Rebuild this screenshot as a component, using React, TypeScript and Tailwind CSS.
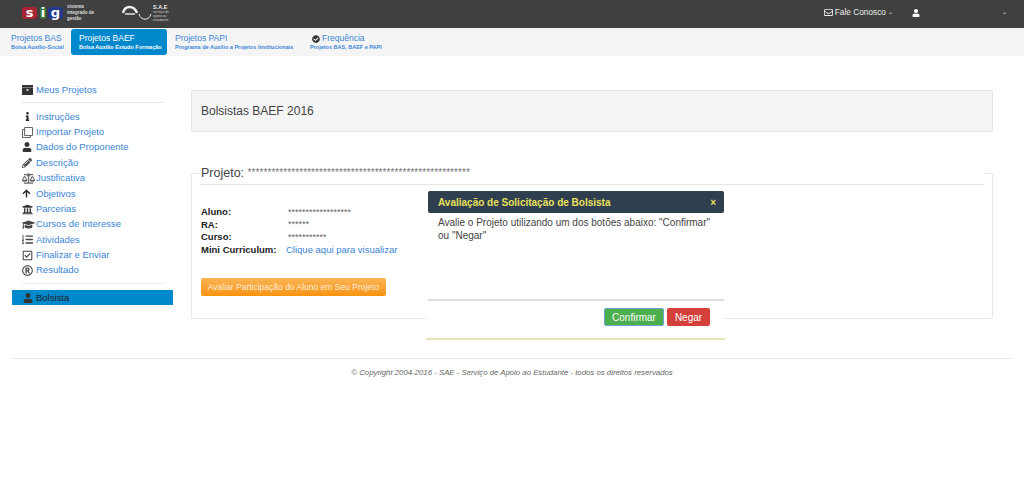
import type { ReactNode } from "react";
import {
  FaArrowUp,
  FaBalanceScale,
  FaCheckCircle,
  FaGraduationCap,
  FaInfo,
  FaListOl,
  FaPencilAlt,
  FaRegCheckSquare,
  FaRegClone,
  FaRegEnvelope,
  FaRegRegistered,
  FaUniversity,
  FaUser,
} from "react-icons/fa";

const tabs = [
  { title: "Projetos BAS", sub: "Bolsa Auxílio-Social", w: "w-[68px]" },
  { title: "Projetos BAEF", sub: "Bolsa Auxílio Estudo Formação", w: "w-[96px]", active: true },
  { title: "Projetos PAPI", sub: "Programa de Auxílio a Projetos Institucionais", w: "w-[135px]" },
  { title: "Frequência", sub: "Projetos BAS, BAEF e PAPI", w: "w-[90px]", check: true },
];

const links: { label: string; icon: ReactNode }[] = [
  { label: "Instruções", icon: <FaInfo className="ml-[1px] size-[9px] text-[#222]" /> },
  { label: "Importar Projeto", icon: <FaRegClone className="size-[11px] text-[#666]" /> },
  { label: "Dados do Proponente", icon: <FaUser className="size-[10px] text-[#333]" /> },
  { label: "Descrição", icon: <FaPencilAlt className="size-[10px] text-[#444]" /> },
  { label: "Justificativa", icon: <FaBalanceScale className="size-[13px] text-[#666]" /> },
  { label: "Objetivos", icon: <FaArrowUp className="size-[9px] text-[#222]" /> },
  { label: "Parcerias", icon: <FaUniversity className="size-[11px] text-[#333]" /> },
  { label: "Cursos de Interesse", icon: <FaGraduationCap className="size-[13px] text-[#444]" /> },
  { label: "Atividades", icon: <FaListOl className="size-[11px] text-[#444]" /> },
  { label: "Finalizar e Enviar", icon: <FaRegCheckSquare className="size-[11px] text-[#444]" /> },
  { label: "Resultado", icon: <FaRegRegistered className="size-[11px] text-[#444]" /> },
];

function SigLogo() {
  return (
    <div className="flex items-center">
      <div className="flex items-center font-bold text-white text-[13px] leading-none font-['DejaVu_Sans',sans-serif]">
        <span className="flex h-[12px] w-[15px] items-center justify-center rounded-[3px] bg-[#a82434]">s</span>
        <span className="ml-[3px] flex h-[12px] w-[6px] items-center justify-center rounded-[2px] bg-[#3a7a3a]">i</span>
        <span className="ml-[2px] flex h-[12px] w-[15px] items-center justify-center rounded-[3px] bg-[#243a8c]">g</span>
      </div>
      <div className="ml-[4px] text-[4.5px] font-bold leading-[6px] text-[#ddd]">
        <div>sistema</div>
        <div>integrado de</div>
        <div>gestão</div>
      </div>
    </div>
  );
}

function SaeLogo() {
  return (
    <div className="flex items-center">
      <svg width="30" height="16" viewBox="0 0 30 16" fill="none" stroke="#eee">
        <path d="M1 8 C3 0 12 0 15 8" strokeWidth="2.4" />
        <path d="M3 9 H13" strokeWidth="1.4" />
        <path d="M17 9 C19 16 27 16 29 9" strokeWidth="1" />
      </svg>
      <div className="ml-[1px] text-[#ccc]">
        <div className="text-[5.5px] font-bold leading-[6px] text-[#eee]">S.A.E</div>
        <div className="text-[3.5px] leading-[4px]">serviço de</div>
        <div className="text-[3.5px] leading-[4px]">apoio ao</div>
        <div className="text-[3.5px] leading-[4px]">estudante</div>
      </div>
    </div>
  );
}

function Field({ label, children }: { label: string; children: ReactNode }) {
  return (
    <div className="flex h-[12.5px] items-center">
      <span className="w-[85px] shrink-0 font-bold text-[#222]">{label}</span>
      {children}
    </div>
  );
}

export default function App() {
  return (
    <div className="relative min-h-[493px] bg-white font-['Liberation_Sans',Arial,sans-serif] text-[9.5px] text-[#333]">
      <header className="flex h-[28px] items-center bg-[#404040] pb-[3px] pl-[22px] text-[#eee]">
        <SigLogo />
        <div className="ml-[28px]">
          <SaeLogo />
        </div>
        <div className="ml-auto flex items-center text-[8.3px]">
          <FaRegEnvelope className="size-[9px]" />
          <span className="ml-[2px]">Fale Conosco</span>
          <span className="ml-[2px] text-[6px]">⌄</span>
          <FaUser className="ml-[19px] size-[8px] text-white" />
          <span className="ml-[82px] mr-[17px] text-[6px]">⌄</span>
        </div>
      </header>

      <nav className="flex h-[28px] items-start bg-[#f5f5f5] pl-[3px] pt-[1px]">
        {tabs.map((t) => (
          <div
            key={t.title}
            className={`flex h-[26px] shrink-0 flex-col justify-center rounded-[3px] px-[8px] ${t.w} ${
              t.active ? "bg-[#0088cc] text-white" : "text-[#3a85d6]"
            }`}
          >
            <div className="flex items-center text-[8.5px] leading-[11px]">
              {t.check && <FaCheckCircle className="ml-[2px] mr-[2px] size-[8px] text-[#333]" />}
              {t.title}
            </div>
            <div className="whitespace-nowrap text-[5.5px] font-bold leading-[7px]">{t.sub}</div>
          </div>
        ))}
      </nav>

      <div className="flex px-[12px]">
        <aside className="w-[161px] shrink-0 pt-[27px] text-[#3a85d6]">
          <div className="flex h-[14px] items-center pl-[10px]">
            <span className="flex w-[14px]">
              <svg width="11" height="10" viewBox="0 0 11 10">
                <rect width="11" height="10" fill="#333" />
                <rect x="0" y="2" width="11" height="1" fill="#777" />
                <rect x="4.5" y="4" width="2" height="2" fill="#ccc" />
              </svg>
            </span>
            Meus Projetos
          </div>
          <div className="mx-[10px] mt-[5px] mb-[6px] h-px w-[142px] bg-[#e5e5e5]" />
          {links.map((l) => (
            <div key={l.label} className="flex h-[15.4px] items-center pl-[10px]">
              <span className="flex w-[14px]">{l.icon}</span>
              {l.label}
            </div>
          ))}
          <div className="mx-[10px] mt-[5px] mb-[6px] h-px w-[142px] bg-[#eee]" />
          <div className="flex h-[15px] items-center bg-[#0088cc] pl-[10px] text-[#222]">
            <span className="flex w-[14px]"><FaUser className="ml-[1px] size-[10px] text-[#333]" /></span>
            Bolsista
          </div>
        </aside>

        <main className="ml-[18px] mr-[19px] min-w-0 flex-1 pt-[34px]">
          <div className="flex h-[42px] items-center border border-[#e6e6e6] bg-[#f5f5f5] px-[9px] text-[12px] text-[#444]">
            Bolsistas BAEF 2016
          </div>
          <fieldset className="mt-[29px] h-[158px] rounded-[2px] border border-[#e8e8e8] px-[8px]">
            <legend className="h-[24px] w-full border-b border-[#e8e8e8] px-[1px] pt-[4px] text-[12.5px] leading-[15px] text-[#444]">
              Projeto: <span className="align-[1px] text-[10px] tracking-[0.08px] text-[#777]">********************************************************</span>
            </legend>
            <div className="ml-[1px] mt-[21px]">
              <Field label="Aluno:"><span className="ml-[2px] text-[9px] text-[#666]">******************</span></Field>
              <Field label="RA:"><span className="ml-[2px] text-[9px] text-[#666]">******</span></Field>
              <Field label="Curso:"><span className="ml-[2px] text-[9px] text-[#666]">***********</span></Field>
              <Field label="Mini Curriculum:"><span className="text-[#3a85d6]">Clique aqui para visualizar</span></Field>
              <button className="mt-[22px] flex h-[18px] w-[185px] items-center justify-center rounded-[2px] bg-gradient-to-b from-[#fbb450] to-[#f89406] text-[8.5px] text-[#ffeedd]">
                Avaliar Participação do Aluno em Seu Projeto
              </button>
            </div>
          </fieldset>
        </main>
      </div>

      <div className="mx-[12px] mt-[39px] h-px bg-[#e8e8e8]" />
      <p className="mt-[8px] text-center text-[7.8px] italic text-[#666]">
        © Copyright 2004-2016 - SAE - Serviço de Apoio ao Estudante - todos os direitos reservados
      </p>

      {/* modal */}
      <div className="absolute left-[426px] top-[191px] flex h-[149px] w-[299px] flex-col border-b-2 border-[#e6e3b5] bg-white pl-[2px] pr-[1px]">
        <div className="flex h-[22px] shrink-0 items-center justify-between rounded-[2px] bg-[#2f3f4f] pl-[10px] pr-[8px] text-[10px] font-bold text-[#e8e05c]">
          <span>Avaliação de Solicitação de Bolsista</span>
          <span>×</span>
        </div>
        <p className="px-[10px] pt-[4px] text-[10px] leading-[12.5px] text-[#444]">
          Avalie o Projeto utilizando um dos botões abaixo: "Confirmar" ou "Negar"
        </p>
        <div className="mt-auto flex h-[39px] items-start justify-end gap-[3px] border-t-2 border-[#ddd] pr-[14px] pt-[7px] text-[10px] text-white">
          <button className="h-[18px] w-[60px] rounded-[2px] border border-[#6aa6d0] bg-[#4cae4c]">Confirmar</button>
          <button className="h-[18px] w-[43px] rounded-[2px] bg-[#d43f3a]">Negar</button>
        </div>
      </div>
    </div>
  );
}
